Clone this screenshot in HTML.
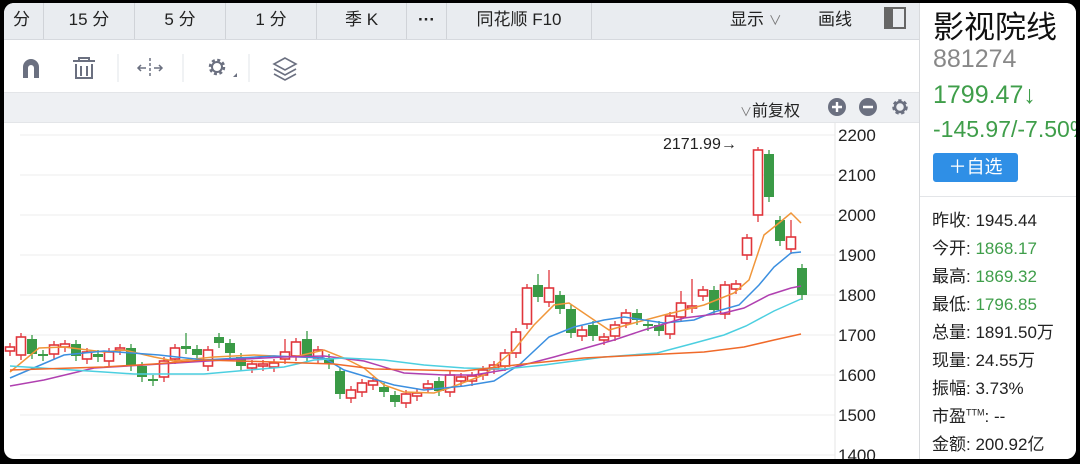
<!DOCTYPE html>
<html><head><meta charset="utf-8"><style>
body{margin:0;width:1080px;height:464px;background:#000;overflow:hidden;font-family:"Liberation Sans","Noto Sans CJK SC",sans-serif}
#f{position:absolute;left:4px;top:3px;width:1072px;height:456px;background:#fff;border-radius:10px;overflow:hidden}
.tb{position:absolute;left:0;top:0;width:916px;height:36px;background:#e9ecf0;border-bottom:1px solid #d6d9de}
.tab{position:absolute;top:0;height:36px;line-height:34px;text-align:center;font-size:17px;color:#222;border-right:1px solid #d0d3d8}
.tool{position:absolute;left:0;top:37px;width:916px;height:52px;background:#fff;border-bottom:1px solid #e3e5e8}
.sub{position:absolute;left:0;top:90px;width:916px;height:29px;background:#eef0f3;border-bottom:1px solid #e3e5e8}
.rp{position:absolute;left:915px;top:0;width:160px;height:460px;border-left:1px solid #d8dadd;background:#fff}
.st{position:absolute;left:12px;font-size:17px;color:#222;white-space:nowrap}
.g{color:#3f9e4a}
.ax{position:absolute;left:834px;font-size:17px;color:#222}
</style></head><body><div id="f">
<div class="tb">
<div class="tab" style="left:-4px;width:43px">分</div>
<div class="tab" style="left:40px;width:90px">15 分</div>
<div class="tab" style="left:131px;width:90px">5 分</div>
<div class="tab" style="left:222px;width:90px">1 分</div>
<div class="tab" style="left:313px;width:89px">季 K</div>
<div class="tab" style="left:403px;width:39px;font-weight:bold">···</div>
<div class="tab" style="left:443px;width:144px">同花顺 F10</div>
<div style="position:absolute;left:726px;top:0;line-height:34px;font-size:17px;color:#222">显示 <span style="color:#777;font-size:13px">∨</span></div>
<div style="position:absolute;left:814px;top:0;line-height:34px;font-size:17px;color:#222">画线</div>
<div style="position:absolute;left:880px;top:4px;width:22px;height:22px;border:2px solid #666;box-sizing:border-box"><div style="width:7px;height:18px;background:#666"></div></div>
</div>
<div class="tool">
<svg width="320" height="52" style="position:absolute;left:0;top:0">
<path d="M19 38 V27 a8 8 0 0 1 16 0 V38 h-5 V28 a3 3 0 0 0 -6 0 V38z" fill="#6b7080"/>
<g stroke="#6b7080" stroke-width="2" fill="none"><path d="M69 21h22M75 21v-3h10v3M72 24v14h16V24M77 26v10M83 26v10"/></g>
<line x1="114" y1="14" x2="114" y2="42" stroke="#e2e4e8"/>
<g stroke="#6b7080" stroke-width="1.5" fill="none"><path d="M146 18v20" stroke-dasharray="3 2"/><path d="M134 28h8M150 28h8M137 25l-3 3 3 3M155 25l3 3-3 3"/></g>
<line x1="179" y1="14" x2="179" y2="42" stroke="#e2e4e8"/>
<circle cx="213" cy="27" r="7" stroke="#6b7080" stroke-width="2.5" fill="none" stroke-dasharray="3 2.5"/><circle cx="213" cy="27" r="5" stroke="#6b7080" stroke-width="2" fill="none"/>
<path d="M233 37h-4l4-4z" fill="#6b7080"/>
<line x1="245" y1="14" x2="245" y2="42" stroke="#e2e4e8"/>
<g stroke="#6b7080" stroke-width="1.6" fill="none"><path d="M281 18l-11 6 11 6 11-6z"/><path d="M270 29l11 6 11-6M270 34l11 6 11-6"/></g>
</svg></div>
<div class="sub">
<div style="position:absolute;left:736px;top:4px;font-size:16px;color:#222"><span style="color:#777;font-size:12px">∨</span>前复权</div>
<svg width="90" height="29" style="position:absolute;left:820px;top:0">
<circle cx="13" cy="14" r="9" fill="#6b7080"/><path d="M8 14h10M13 9v10" stroke="#fff" stroke-width="2.4"/>
<circle cx="44" cy="14" r="9" fill="#6b7080"/><path d="M39 14h10" stroke="#fff" stroke-width="2.4"/>
<circle cx="76" cy="14" r="6" stroke="#6b7080" stroke-width="3.5" fill="none" stroke-dasharray="3 2.3"/><circle cx="76" cy="14" r="5" stroke="#6b7080" stroke-width="2.5" fill="none"/>
</svg></div>
<svg id="ch" width="916" height="340" style="position:absolute;left:0;top:120px"></svg>
<div class="ax" style="top:123px">2200</div><div class="ax" style="top:163px">2100</div><div class="ax" style="top:203px">2000</div><div class="ax" style="top:243px">1900</div><div class="ax" style="top:283px">1800</div><div class="ax" style="top:323px">1700</div><div class="ax" style="top:363px">1600</div><div class="ax" style="top:403px">1500</div><div class="ax" style="top:443px">1400</div>
<div style="position:absolute;left:659px;top:133px;font-size:16px;color:#222">2171.99→</div>
<div class="rp">
<div style="position:absolute;left:13px;top:-1px;font-size:31px;color:#111">影视院线</div>
<div style="position:absolute;left:13px;top:42px;font-size:25px;color:#888">881274</div>
<div style="position:absolute;left:13px;top:78px;font-size:25px" class="g">1799.47↓</div>
<div style="position:absolute;left:13px;top:113px;font-size:23px;white-space:nowrap" class="g">-145.97/-7.50%</div>
<div style="position:absolute;left:13px;top:150px;width:85px;height:29px;background:#2f8fe6;border-radius:3px;color:#fff;font-size:18px;line-height:29px;text-align:center">＋自选</div>
<div style="position:absolute;left:0;top:193px;width:160px;border-top:1px solid #e3e5e8"></div>
<div class="st" style="top:203px">昨收: 1945.44</div>
<div class="st" style="top:231px">今开: <span class="g">1868.17</span></div>
<div class="st" style="top:259px">最高: <span class="g">1869.32</span></div>
<div class="st" style="top:287px">最低: <span class="g">1796.85</span></div>
<div class="st" style="top:315px">总量: 1891.50万</div>
<div class="st" style="top:343px">现量: 24.55万</div>
<div class="st" style="top:371px">振幅: 3.73%</div>
<div class="st" style="top:399px">市盈<sup style="font-size:9px">TTM</sup>: --</div>
<div class="st" style="top:427px">金额: 200.92亿</div>
</div>
</div>
<script>
var s=document.getElementById('ch'),o=-123,h='';
for(var i=0;i<9;i++){var y=135+i*40+o;h+='<line x1="16" x2="831" y1="'+y+'" y2="'+y+'" stroke="#ececec"/>';}
h+='<line x1="831" x2="831" y1="0" y2="340" stroke="#e6e6e6"/>';
var c=[[347,351,1],[337,355,1],[339,354,0],[354,356,0],[345,354,1],[344,347,1],[344,356,0],[352,359,1],[354,357,0],[352,361,1],[348,350,1],[348,366,0],[366,377,0],[379,381,0],[361,377,1],[348,359,1],[346,349,0],[349,355,0],[350,366,1],[337,343,0],[343,353,0],[357,366,0],[364,368,1],[364,366,1],[363,367,1],[352,359,1],[342,356,1],[339,356,0],[350,358,1],[358,364,0],[371,394,0],[390,398,1],[383,392,1],[381,385,1],[387,392,0],[395,402,0],[394,403,1],[393,396,1],[384,388,1],[381,391,0],[375,392,1],[377,381,1],[376,381,1],[370,375,1],[365,369,1],[353,366,1],[332,353,1],[288,324,1],[285,297,0],[288,302,1],[295,309,0],[309,333,0],[330,336,1],[325,336,0],[337,340,1],[325,336,1],[313,323,1],[313,320,0],[324,326,0],[325,331,0],[316,334,1],[303,317,1],[306,308,1],[290,296,1],[290,310,0],[285,314,1],[284,289,1],[238,255,1],[150,215,1],[154,197,0],[220,241,0],[237,249,1],[268,295,0]];
var wk={16:333,48:274,49:270,61:291,62:279,68:147,71:220,27:331,1:333,25:339};
for(var k=0;k<c.length;k++){var x=6+k*11.0,a=c[k][0]+o,b=c[k][1]+o,r=c[k][2],col=r?'#e0353b':'#3a9a46';
var wt=(wk[k]?wk[k]+o:a-4),wb=b+5;if(k==68)wb=222+o;
h+='<line x1="'+x+'" x2="'+x+'" y1="'+wt+'" y2="'+wb+'" stroke="'+col+'" stroke-width="1.3"/>';
if(r)h+='<rect x="'+(x-4.5)+'" y="'+a+'" width="9" height="'+Math.max(b-a,1.5)+'" fill="#fff" stroke="'+col+'" stroke-width="1.6"/>';
else h+='<rect x="'+(x-5)+'" y="'+a+'" width="10" height="'+Math.max(b-a,2)+'" fill="'+col+'"/>';}
function pl(p,col){var d='';for(var i=0;i<p.length;i+=2)d+=p[i]+','+(p[i+1]+o)+' ';h+='<polyline points="'+d+'" fill="none" stroke="'+col+'" stroke-width="1.5"/>';}
pl([6,372,35,348,60,347,100,352,120,350,150,357,170,361,210,357,250,355,290,357,320,350,340,358,360,368,380,385,400,392,430,393,445,388,480,375,510,350,530,325,550,305,565,303,590,320,605,330,630,323,660,315,700,305,730,293,745,280,760,235,775,223,787,213,797,223],'#f0963a');
pl([6,378,60,355,100,351,155,355,200,360,270,356,320,358,340,370,390,385,420,390,460,386,490,381,515,365,545,337,570,327,600,320,620,317,660,323,690,320,710,312,735,305,755,285,770,267,787,253,797,252],'#3b8fe0');
pl([6,386,40,380,90,368,140,365,220,360,280,357,320,356,360,361,400,373,440,375,470,375,500,370,550,357,610,340,640,330,680,318,720,313,740,308,765,295,787,288,797,286],'#b040b0');
pl([6,366,100,372,130,374,200,374,280,367,310,360,340,358,380,360,420,365,460,368,500,369,540,365,600,357,653,353,687,344,720,335,742,326,770,311,797,299],'#4ccfe0');
pl([6,370,100,367,150,364,200,360,270,362,330,364,370,369,420,370,460,371,520,364,580,358,640,355,700,352,740,347,770,340,797,334],'#f06a2a');
s.innerHTML=h;
</script>
</body></html>
